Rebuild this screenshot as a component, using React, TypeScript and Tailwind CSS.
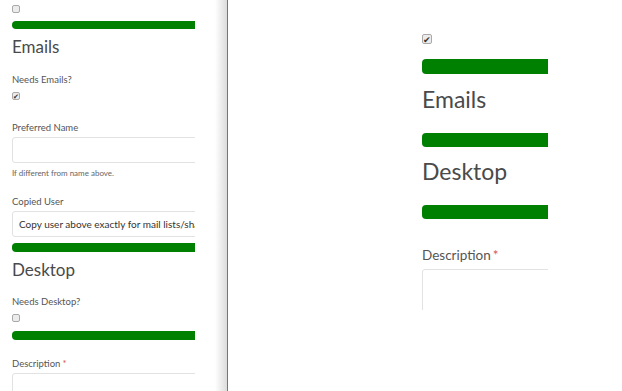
import React from 'react';

function Box({ checked, size }: { checked?: boolean; size: 'sm' | 'lg' }) {
  const dim = size === 'sm' ? 'w-[8px] h-[8px] text-[7px]' : 'w-[10px] h-[10px] text-[9px]';
  return (
    <div
      className={`${dim} border border-[#a9a9a9] bg-[#ececec] rounded-[2px] flex items-center justify-center leading-none text-[#333]`}
    >
      {checked ? '✔' : null}
    </div>
  );
}

function Bar({ className }: { className: string }) {
  return <div className={`bg-[#008000] rounded-[4px] ${className}`} />;
}

export default function App() {
  return (
    <div
      className="w-[622px] h-[391px] flex overflow-hidden bg-white text-[#555]"
      style={{ fontFamily: 'Lato, "Open Sans", sans-serif' }}
    >
      {/* Left form panel */}
      <div className="w-[215px] h-full pl-3 pr-5 shrink-0">
        <div className="w-[183px] h-full overflow-hidden">
          <div className="mt-[5px]">
            <Box size="sm" />
          </div>
          <Bar className="mt-[8px] h-[8px] w-[190px]" />
          <div className="mt-[9px] text-[17px] leading-[18px] text-[#4a4a4a]">Emails</div>
          <div className="mt-[18px] text-[9.5px] leading-[12px]">Needs Emails?</div>
          <div className="mt-[6px]">
            <Box size="sm" checked />
          </div>
          <div className="mt-[22px] text-[9.5px] leading-[12px]">Preferred Name</div>
          <div className="mt-[3px] h-[26px] w-[200px] border border-[#e2e2e2] rounded-[3px]" />
          <div className="mt-[5px] text-[8px] leading-[10px] text-[#666]">If different from name above.</div>
          <div className="mt-[18px] text-[9.5px] leading-[12px]">Copied User</div>
          <div className="mt-[3px] h-[26px] w-[200px] border border-[#e2e2e2] rounded-[3px] pl-[6px] flex items-center text-[10px] text-[#333] whitespace-nowrap overflow-hidden">
            Copy user above exactly for mail lists/shares
          </div>
          <Bar className="mt-[6px] h-[9px] w-[190px]" />
          <div className="mt-[9px] text-[17px] leading-[18px] text-[#4a4a4a]">Desktop</div>
          <div className="mt-[17px] text-[9.5px] leading-[12px]">Needs Desktop?</div>
          <div className="mt-[6px]">
            <Box size="sm" />
          </div>
          <Bar className="mt-[9px] h-[9px] w-[190px]" />
          <div className="mt-[18px] text-[9.5px] leading-[12px]">
            Description<span className="text-[#d9534f] ml-[2px]">*</span>
          </div>
          <div className="mt-[3px] h-[26px] w-[200px] border border-[#e2e2e2] rounded-[3px]" />
        </div>
      </div>

      {/* Shadow edge */}
      <div className="w-[12px] h-full shrink-0 bg-gradient-to-r from-white to-[#dcdcdc]" />
      <div className="w-px h-full shrink-0 bg-[#3a87c8]" />

      {/* Zoomed preview */}
      <div className="flex-1 h-full pl-[194px] pt-[34px]">
        <div className="w-[126px] h-[276px] overflow-hidden">
          <Box size="lg" checked />
          <Bar className="mt-[15px] h-[15px] w-[160px]" />
          <div className="mt-[12px] text-[23px] leading-[26px] text-[#4a4a4a]">Emails</div>
          <Bar className="mt-[21px] h-[14px] w-[160px]" />
          <div className="mt-[11px] text-[23px] leading-[26px] text-[#4a4a4a]">Desktop</div>
          <Bar className="mt-[21px] h-[14px] w-[160px]" />
          <div className="mt-[28px] text-[13.5px] leading-[16px] whitespace-nowrap">
            Description<span className="text-[#d9534f] ml-[2px]">*</span>
          </div>
          <div className="mt-[6px] h-[60px] w-[200px] border border-[#e2e2e2] rounded-[3px]" />
        </div>
      </div>
    </div>
  );
}
